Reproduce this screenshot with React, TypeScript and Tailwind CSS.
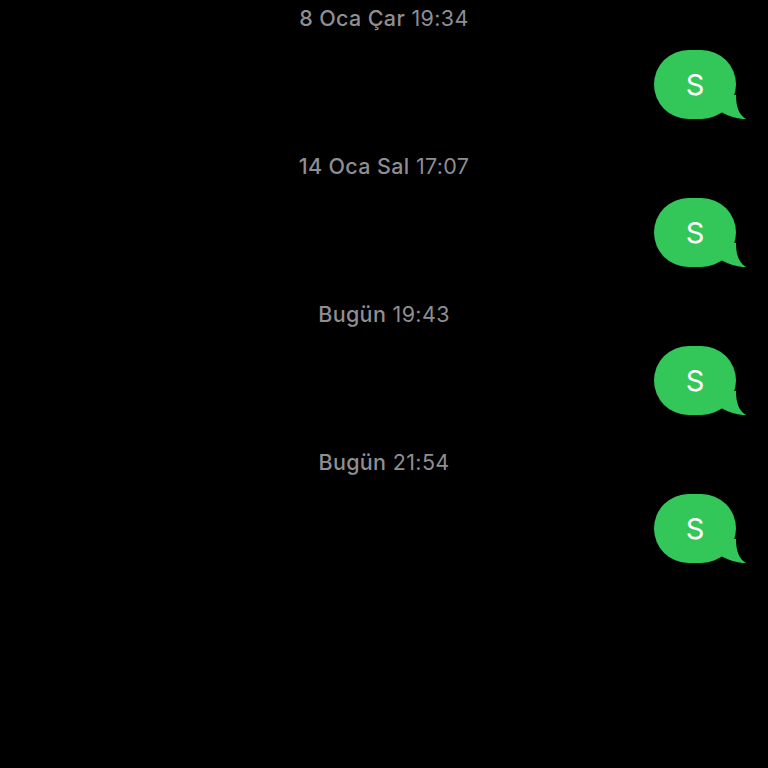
import React from 'react'

const messages = [
  { day: '8 Oca Çar', time: '19:34', text: 'S' },
  { day: '14 Oca Sal', time: '17:07', text: 'S' },
  { day: 'Bugün', time: '19:43', text: 'S' },
  { day: 'Bugün', time: '21:54', text: 'S' },
]

const Bubble: React.FC<{ text: string }> = ({ text }) => (
  <div className="relative h-[69px] w-[82px] rounded-[35px] bg-[#33c759] flex items-center justify-center">
    <span className="text-[29px] leading-none text-white">{text}</span>
    <svg
      className="absolute -right-[10px] bottom-0 h-[24px] w-[30px]"
      viewBox="0 0 30 24"
    >
      <path d="M0 0 H20 C20 12 23 20 30 24 C24 24.5 14 22 7 18 C4 16 0 14 0 12 Z" fill="#33c759" />
    </svg>
  </div>
)

const App: React.FC = () => {
  return (
    <div className="min-h-[768px] w-[768px] bg-black pt-[6px] font-['Inter',sans-serif]">
      {messages.map((m, i) => (
        <div key={i} className="mb-[35px]">
          <div className="h-[24px] text-center text-[21.5px] leading-[24px] tracking-[0.35px] text-[#8e8e93]">
            <span className="font-medium">{m.day}</span> <span>{m.time}</span>
          </div>
          <div className="mt-[20px] flex justify-end pr-[32px]">
            <Bubble text={m.text} />
          </div>
        </div>
      ))}
    </div>
  )
}

export default App
